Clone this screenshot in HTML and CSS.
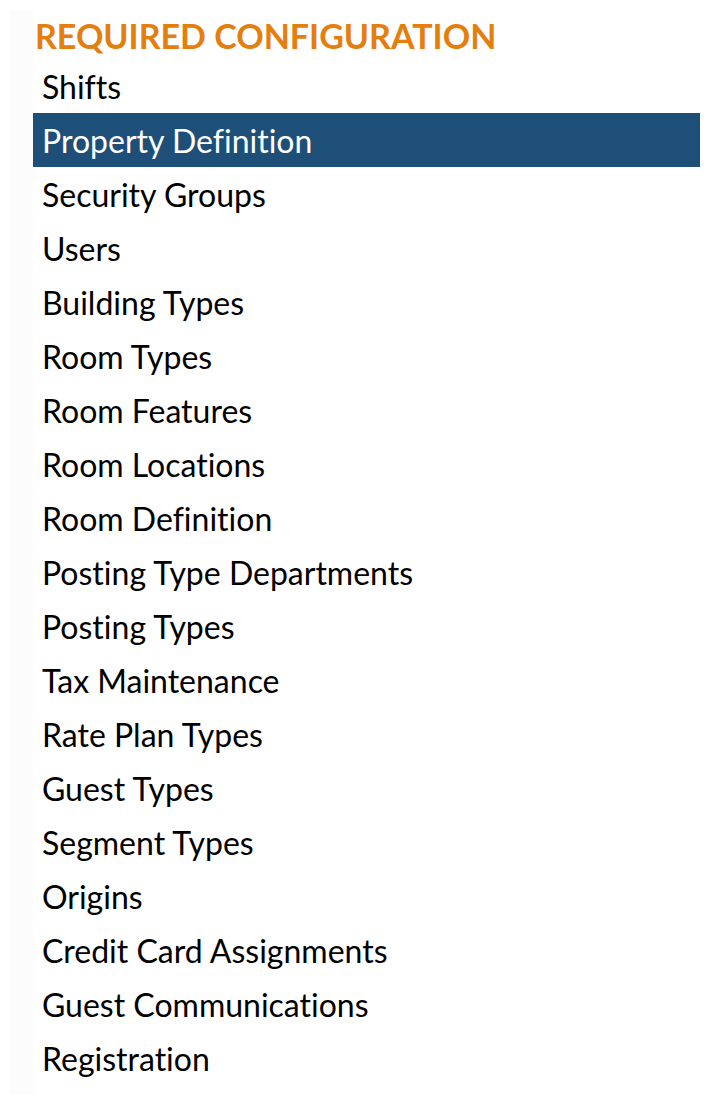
FILE: index.html
```html
<!DOCTYPE html>
<html>
<head>
<meta charset="utf-8">
<link rel="stylesheet" href="styles.css">
</head>
<body>
<div class="panel">
  <div class="content">
    <h2 class="title">REQUIRED CONFIGURATION</h2>
    <ul class="menu">
      <li class="item">Shifts</li>
      <li class="item active">Property Definition</li>
      <li class="item">Security Groups</li>
      <li class="item">Users</li>
      <li class="item">Building Types</li>
      <li class="item">Room Types</li>
      <li class="item">Room Features</li>
      <li class="item">Room Locations</li>
      <li class="item">Room Definition</li>
      <li class="item">Posting Type Departments</li>
      <li class="item">Posting Types</li>
      <li class="item">Tax Maintenance</li>
      <li class="item">Rate Plan Types</li>
      <li class="item">Guest Types</li>
      <li class="item">Segment Types</li>
      <li class="item">Origins</li>
      <li class="item">Credit Card Assignments</li>
      <li class="item">Guest Communications</li>
      <li class="item">Registration</li>
    </ul>
  </div>
</div>
</body>
</html>
```
FILE: styles.css
```css
html, body {
  margin: 0;
  padding: 0;
  background: #ffffff;
}
body {
  font-family: Lato, "Open Sans", sans-serif;
  font-variant-ligatures: none;
}
.panel {
  margin: 10px 12px 10px 10px;
  background: #fcfcfc;
  padding-left: 23px;
  height: 1085px;
  box-sizing: border-box;
}
.content {
  background: #ffffff;
  height: 100%;
  padding-top: 7px;
  box-sizing: border-box;
}
.title {
  margin: 0 0 4px 2px;
  font-size: 34px;
  font-weight: 700;
  line-height: 38px;
  color: #e47e0e;
}
.menu {
  list-style: none;
  margin: 0;
  padding: 0;
}
.item {
  height: 54px;
  display: flex;
  align-items: center;
  padding-left: 9px;
  font-size: 32px;
  color: #000000;
}
.item.active {
  background: #1d4f78;
  color: #ffffff;
}
```
